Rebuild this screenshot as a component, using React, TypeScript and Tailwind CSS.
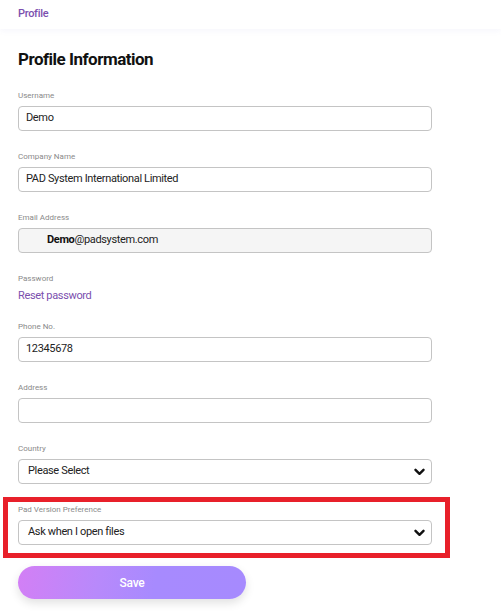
import React from "react";

const Label = ({ children }: { children: React.ReactNode }) => (
  <div className="text-[8px] leading-[10px] text-[#8a8a8a] mb-[5px]">{children}</div>
);

const Chevron = () => (
  <svg
    width="11"
    height="8"
    viewBox="0 0 11 8"
    className="absolute right-[6px] top-1/2 -translate-y-1/2"
  >
    <polyline
      points="1.5,1.8 5.5,5.8 9.5,1.8"
      fill="none"
      stroke="#111"
      strokeWidth="2.4"
      strokeLinecap="round"
      strokeLinejoin="round"
    />
  </svg>
);

const fieldText = "text-[11px] tracking-[-0.35px] text-[#222]";

const TextField = ({ label, value }: { label: string; value?: string }) => (
  <div className="mb-[21px]">
    <Label>{label}</Label>
    <div className={`h-[25px] w-[414px] rounded-[4px] border border-[#c4c4c4] bg-white px-[7px] flex items-center ${fieldText}`}>
      {value}
    </div>
  </div>
);

const SelectField = ({ label, value }: { label: string; value: string }) => (
  <>
    <Label>{label}</Label>
    <div className={`relative h-[25px] w-[414px] rounded-[4px] border border-[#c4c4c4] bg-white pl-[9px] flex items-center ${fieldText}`}>
      {value}
      <Chevron />
    </div>
  </>
);

export default function App() {
  return (
    <div
      className="w-[501px] h-[612px] bg-white overflow-hidden"
      style={{ fontFamily: "Roboto, 'Liberation Sans', sans-serif" }}
    >
      {/* top bar */}
      <div className="h-[29px] bg-white flex items-center px-[18px] shadow-[0_2px_6px_rgba(110,100,200,0.06)]">
        <span className="text-[11px] font-medium tracking-[-0.3px] text-[#7b4fae]">Profile</span>
      </div>

      <div className="px-[18px] pt-[20px]">
        <h2 className="text-[17px] font-bold tracking-[-0.5px] text-[#111] leading-[20px] mb-[22px]">
          Profile Information
        </h2>

        <TextField label="Username" value="Demo" />
        <TextField label="Company Name" value="PAD System International Limited" />

        <div className="mb-[21px]">
          <Label>Email Address</Label>
          <div className={`h-[25px] w-[414px] rounded-[4px] border border-[#c4c4c4] bg-[#f5f5f5] pl-[28px] flex items-center ${fieldText}`}>
            <span className="font-bold text-[#111]">Demo</span>@padsystem.com
          </div>
        </div>

        <div className="mb-[18px]">
          <div className="text-[8px] leading-[10px] text-[#8a8a8a] mb-[4px]">Password</div>
          <a className="block text-[11px] tracking-[-0.35px] leading-[16px] text-[#7b4fae] cursor-pointer">
            Reset password
          </a>
        </div>

        <TextField label="Phone No." value="12345678" />
        <TextField label="Address" />

        <div className="mb-[21px]">
          <SelectField label="Country" value="Please Select" />
        </div>

        <div className="relative w-[414px] mb-[21px]">
          <SelectField label="Pad Version Preference" value="Ask when I open files" />
          <div className="absolute -left-[15px] -right-[18px] -top-[8px] -bottom-[13px] border-[5px] border-[#e8202a] pointer-events-none" />
        </div>

        <button className="w-[228px] h-[33px] rounded-full text-white text-[12px] font-medium tracking-[-0.3px] bg-[linear-gradient(100deg,#d37ff5_0%,#b889fb_35%,#a78afe_60%,#a68afe_100%)] shadow-[0_4px_10px_rgba(0,0,0,0.12)]">
          Save
        </button>
      </div>
    </div>
  );
}
